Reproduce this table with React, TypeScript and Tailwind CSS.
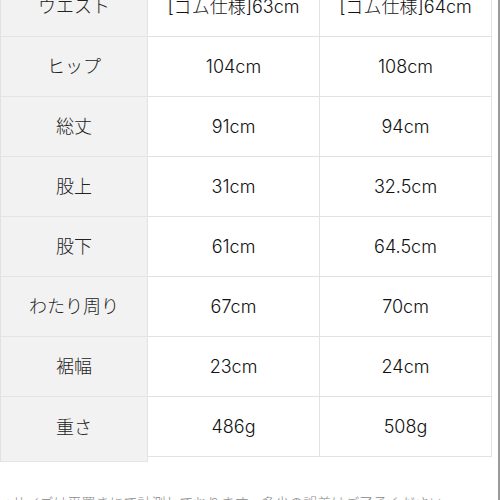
import React from 'react';

const rows: [string, string, string][] = [
  ['ウエスト', '[ゴム仕様]63cm', '[ゴム仕様]64cm'],
  ['ヒップ', '104cm', '108cm'],
  ['総丈', '91cm', '94cm'],
  ['股上', '31cm', '32.5cm'],
  ['股下', '61cm', '64.5cm'],
  ['わたり周り', '67cm', '70cm'],
  ['裾幅', '23cm', '24cm'],
  ['重さ', '486g', '508g'],
];

export default function App() {
  return (
    <div
      className="w-[500px] h-[500px] overflow-hidden bg-white border-r-2 border-[#9a9a9a] font-light"
      style={{ fontFamily: 'Inter, "Noto Sans CJK JP", "Noto Sans", sans-serif' }}
    >
      {/* size table, first row scrolled partly off the top */}
      <div className="-mt-[23px] w-[492px] border-l border-[#e2e2e2]">
        {rows.map(([label, a, b], i) => {
          const last = i === rows.length - 1;
          return (
            <div key={label} className="grid grid-cols-[147px_172px_172px] items-start">
              <div
                className={`flex items-center justify-center bg-[#f2f2f2] border-r border-b border-[#e4e4e4] text-[18px] text-[#222] ${
                  last ? 'h-[65px] pb-[3px]' : 'h-[60px]'
                }`}
              >
                {label}
              </div>
              <div className="flex h-[60px] items-center justify-center border-r border-b border-[#e2e2e2] text-[18px] text-[#111]">
                {a}
              </div>
              <div className="flex h-[60px] items-center justify-center border-r border-b border-[#e2e2e2] text-[18px] text-[#111]">
                {b}
              </div>
            </div>
          );
        })}
      </div>

      <p className="mt-[31px] pl-[4px] text-[14px] leading-[20px] text-[#888] whitespace-nowrap">
        ※サイズは平置きにて計測しております。多少の誤差はご了承ください。
      </p>
    </div>
  );
}
